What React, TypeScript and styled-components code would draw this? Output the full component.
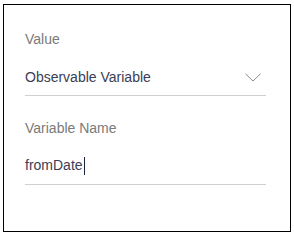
import React from "react";
import styled, { createGlobalStyle } from "styled-components";

const Global = createGlobalStyle`
  html, body { margin: 0; padding: 0; background: #fff; }
  body { font-family: "Liberation Sans", Arial, sans-serif; }
`;

const Page = styled.div`
  padding: 4px 0 0 3px;
`;

const Panel = styled.div`
  box-sizing: border-box;
  width: 288px;
  height: 228px;
  border: 1.5px solid #000;
  padding: 24px 24px 0 21px;
  display: flex;
  flex-direction: column;
`;

const Field = styled.div`
  display: flex;
  flex-direction: column;
  margin-bottom: 22px;
`;

const Label = styled.div`
  font-size: 14px;
  color: #7a7a7a;
  line-height: 20px;
  margin-bottom: 16px;
`;

const Control = styled.div`
  display: flex;
  align-items: center;
  justify-content: space-between;
  height: 24px;
  border-bottom: 1px solid #d0d0d4;
  padding-bottom: 6px;
  font-size: 14px;
  color: #3a3d55;
`;

const Caret = styled.span`
  display: inline-block;
  width: 1px;
  height: 18px;
  background: #1d2140;
  vertical-align: middle;
  margin-left: 1px;
`;

const Chevron = styled.svg`
  margin-right: 5px;
`;

export default function App() {
  return (
    <>
      <Global />
      <Page>
        <Panel>
          <Field>
            <Label>Value</Label>
            <Control>
              <span>Observable Variable</span>
              <Chevron width="16" height="9" viewBox="0 0 16 9">
                <path d="M0.5 0.8 L8 8 L15.5 0.8" fill="none" stroke="#8a8a95" strokeWidth="1" />
              </Chevron>
            </Control>
          </Field>
          <Field>
            <Label>Variable Name</Label>
            <Control>
              <span>
                fromDate
                <Caret />
              </span>
            </Control>
          </Field>
        </Panel>
      </Page>
    </>
  );
}
